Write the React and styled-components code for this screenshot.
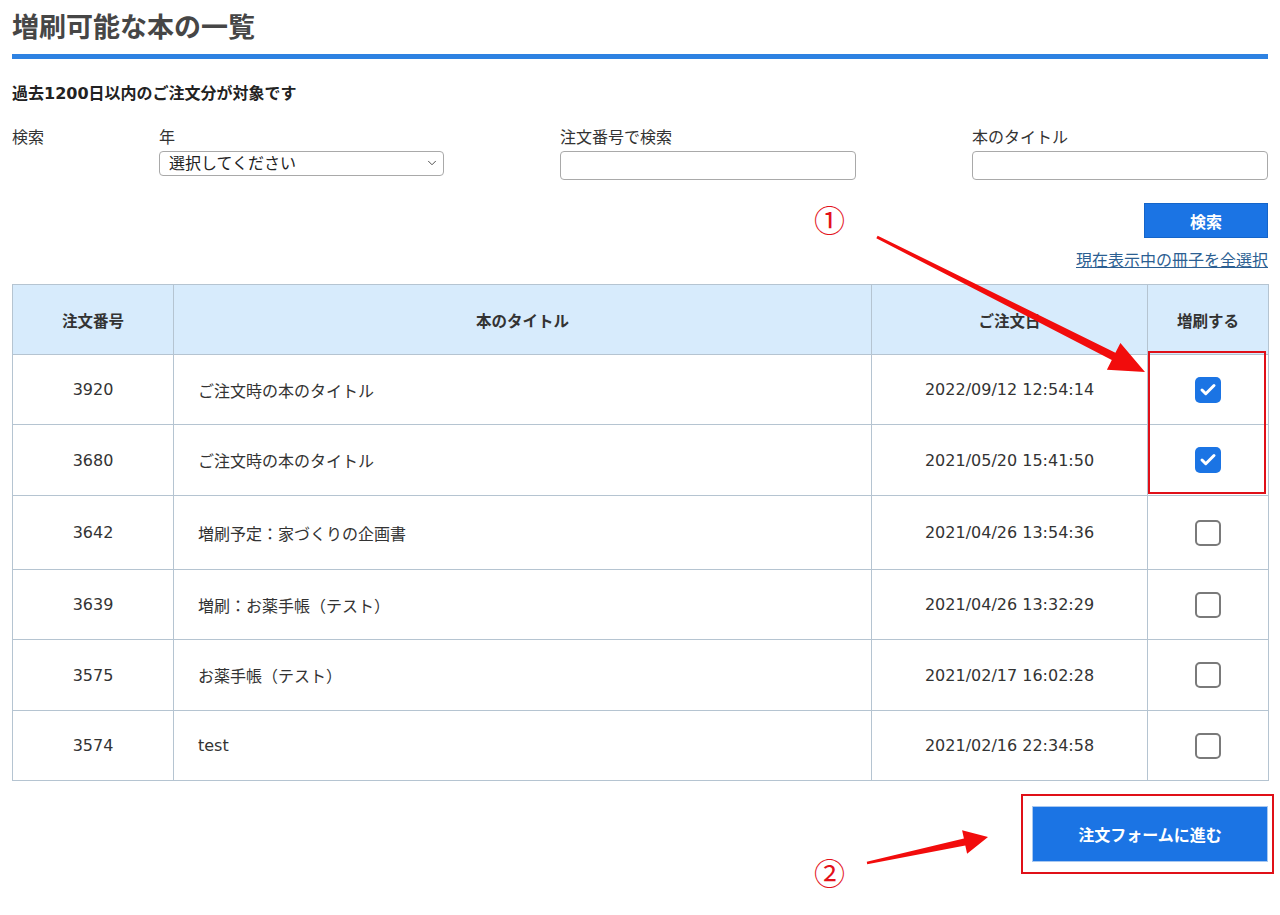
import styled, { createGlobalStyle } from 'styled-components';
import { ChevronDown, Check } from 'lucide-react';

const GlobalStyle = createGlobalStyle`
  body {
    margin: 0;
    background: #fff;
    font-family: "DejaVu Sans", "Noto Sans CJK JP", sans-serif;
    color: #333;
  }
`;

const orders = [
  { no: '3920', title: 'ご注文時の本のタイトル', date: '2022/09/12 12:54:14', checked: true, h: 70 },
  { no: '3680', title: 'ご注文時の本のタイトル', date: '2021/05/20 15:41:50', checked: true, h: 71 },
  { no: '3642', title: '増刷予定：家づくりの企画書', date: '2021/04/26 13:54:36', checked: false, h: 74 },
  { no: '3639', title: '増刷：お薬手帳（テスト）', date: '2021/04/26 13:32:29', checked: false, h: 70 },
  { no: '3575', title: 'お薬手帳（テスト）', date: '2021/02/17 16:02:28', checked: false, h: 71 },
  { no: '3574', title: 'test', date: '2021/02/16 22:34:58', checked: false, h: 70 },
];

const App = () => {
  return (
    <>
      <GlobalStyle />
      <Page>
        <Title>増刷可能な本の一覧</Title>
        <Notice>過去1200日以内のご注文分が対象です</Notice>

        <SearchGrid>
          <Label>検索</Label>
          <Field>
            <Label>年</Label>
            <SelectWrap>
              <Select defaultValue="">
                <option value="">選択してください</option>
              </Select>
              <Chevron size={14} strokeWidth={1.6} />
            </SelectWrap>
          </Field>
          <Field>
            <Label>注文番号で検索</Label>
            <TextInput />
          </Field>
          <Field>
            <Label>本のタイトル</Label>
            <TextInput />
          </Field>
        </SearchGrid>

        <ButtonRow>
          <SearchButton>検索</SearchButton>
        </ButtonRow>
        <LinkRow>
          <SelectAll href="#">現在表示中の冊子を全選択</SelectAll>
        </LinkRow>

        <Table>
          <colgroup>
            <col style={{ width: 161 }} />
            <col style={{ width: 698 }} />
            <col style={{ width: 276 }} />
            <col style={{ width: 121 }} />
          </colgroup>
          <thead>
            <tr>
              <Th>注文番号</Th>
              <Th>本のタイトル</Th>
              <Th>ご注文日</Th>
              <Th>増刷する</Th>
            </tr>
          </thead>
          <tbody>
            {orders.map((o) => (
              <tr key={o.no} style={{ height: o.h }}>
                <Td align="center">{o.no}</Td>
                <Td align="left">{o.title}</Td>
                <Td align="center">{o.date}</Td>
                <Td align="center">
                  <Box checked={o.checked}>
                    {o.checked && <Check size={18} strokeWidth={4} color="#fff" />}
                  </Box>
                </Td>
              </tr>
            ))}
          </tbody>
        </Table>

        <FooterRow>
          <SubmitButton>注文フォームに進む</SubmitButton>
        </FooterRow>

        {/* annotations drawn over the page */}
        <Mark style={{ left: 814, top: 199 }}>①</Mark>
        <Mark style={{ left: 814, top: 852 }}>②</Mark>
        <RedFrame style={{ left: 1148, top: 351, width: 118, height: 143 }} />
        <RedFrame style={{ left: 1021, top: 794, width: 253, height: 80 }} />
        <Arrows width="1280" height="915" viewBox="0 0 1280 915">
          <polygon
            points="876.3,238.3 877.7,235.7 1115.4,352.7 1120.4,342.9 1145,372 1106.9,369.7 1111.8,359.9"
            fill="#f20c0c"
          />
          <polygon
            points="867.25,864.2 866.75,861.8 963.9,838.6 962.1,830.3 988,837 967.1,853.7 965.3,845.4"
            fill="#f20c0c"
          />
        </Arrows>
      </Page>
    </>
  );
};

const Page = styled.div`
  position: relative;
  width: 1256px;
  min-height: 915px;
  padding: 0 12px;
`;

const Title = styled.h1`
  margin: 0;
  padding-top: 8px;
  padding-bottom: 6px;
  line-height: 40px;
  font-size: 27px;
  font-weight: 700;
  color: #464646;
  border-bottom: 5px solid #2e82e2;
`;

const Notice = styled.p`
  margin: 24px 0 0;
  font-size: 16px;
  line-height: 22px;
  font-weight: 700;
  color: #222;
`;

const SearchGrid = styled.div`
  display: grid;
  grid-template-columns: 147px 401px 412px 296px;
  margin-top: 23px;
  align-items: start;
`;

const Field = styled.div`
  display: flex;
  flex-direction: column;
  gap: 3px;
`;

const Label = styled.span`
  font-size: 16px;
  line-height: 20px;
  color: #333;
`;

const SelectWrap = styled.div`
  position: relative;
  width: 285px;
`;

const Select = styled.select`
  appearance: none;
  width: 285px;
  height: 25px;
  padding: 0 24px 0 9px;
  border: 1px solid #a9a9a9;
  border-radius: 4px;
  background: #fff;
  font-family: inherit;
  font-size: 16px;
  color: #222;
`;

const Chevron = styled(ChevronDown)`
  position: absolute;
  right: 5px;
  top: 5px;
  color: #444;
  pointer-events: none;
`;

const TextInput = styled.input`
  width: 296px;
  height: 29px;
  box-sizing: border-box;
  border: 1px solid #a9a9a9;
  border-radius: 4px;
  background: #fff;
`;

const ButtonRow = styled.div`
  display: flex;
  justify-content: flex-end;
  margin-top: 23px;
`;

const SearchButton = styled.button`
  width: 124px;
  height: 35px;
  border: 1px solid #1565c9;
  background: #1b74e4;
  color: #fff;
  font-family: inherit;
  font-size: 16px;
  font-weight: 700;
`;

const LinkRow = styled.div`
  display: flex;
  justify-content: flex-end;
  margin-top: 13px;
  line-height: 20px;
`;

const SelectAll = styled.a`
  font-size: 16px;
  color: #2c5f92;
  text-decoration: underline;
`;

const Table = styled.table`
  width: 1256px;
  margin-top: 13px;
  border-collapse: collapse;
  table-layout: fixed;
  font-size: 16px;
  color: #333;
`;

const Th = styled.th`
  height: 69px;
  padding: 0;
  background: #d7ebfc;
  border: 1px solid #b5c4d1;
  font-size: 15.5px;
  font-weight: 700;
  color: #333;
`;

const Td = styled.td`
  padding: 0 ${(p) => (p.align === 'left' ? '24px' : '0')};
  border: 1px solid #b5c4d1;
  text-align: ${(p) => p.align};
  vertical-align: middle;
`;

const Box = styled.span`
  display: inline-flex;
  align-items: center;
  justify-content: center;
  width: 26px;
  height: 26px;
  box-sizing: border-box;
  border-radius: 5px;
  vertical-align: middle;
  background: ${(p) => (p.checked ? '#1b74e4' : '#fff')};
  border: ${(p) => (p.checked ? 'none' : '2px solid #7a7a7a')};
`;

const FooterRow = styled.div`
  display: flex;
  justify-content: flex-end;
  margin-top: 25px;
`;

const SubmitButton = styled.button`
  width: 236px;
  height: 56px;
  border: 1px solid #a8c8f0;
  background: #1b74e4;
  color: #fff;
  font-family: inherit;
  font-size: 16px;
  font-weight: 700;
`;

const Mark = styled.span`
  position: absolute;
  font-family: "Noto Sans CJK JP", sans-serif;
  font-size: 31px;
  line-height: 40px;
  color: #e3111a;
`;

const RedFrame = styled.div`
  position: absolute;
  box-sizing: border-box;
  border: 2px solid #e01018;
`;

const Arrows = styled.svg`
  position: absolute;
  left: 0;
  top: 0;
  pointer-events: none;
`;

export default App;
